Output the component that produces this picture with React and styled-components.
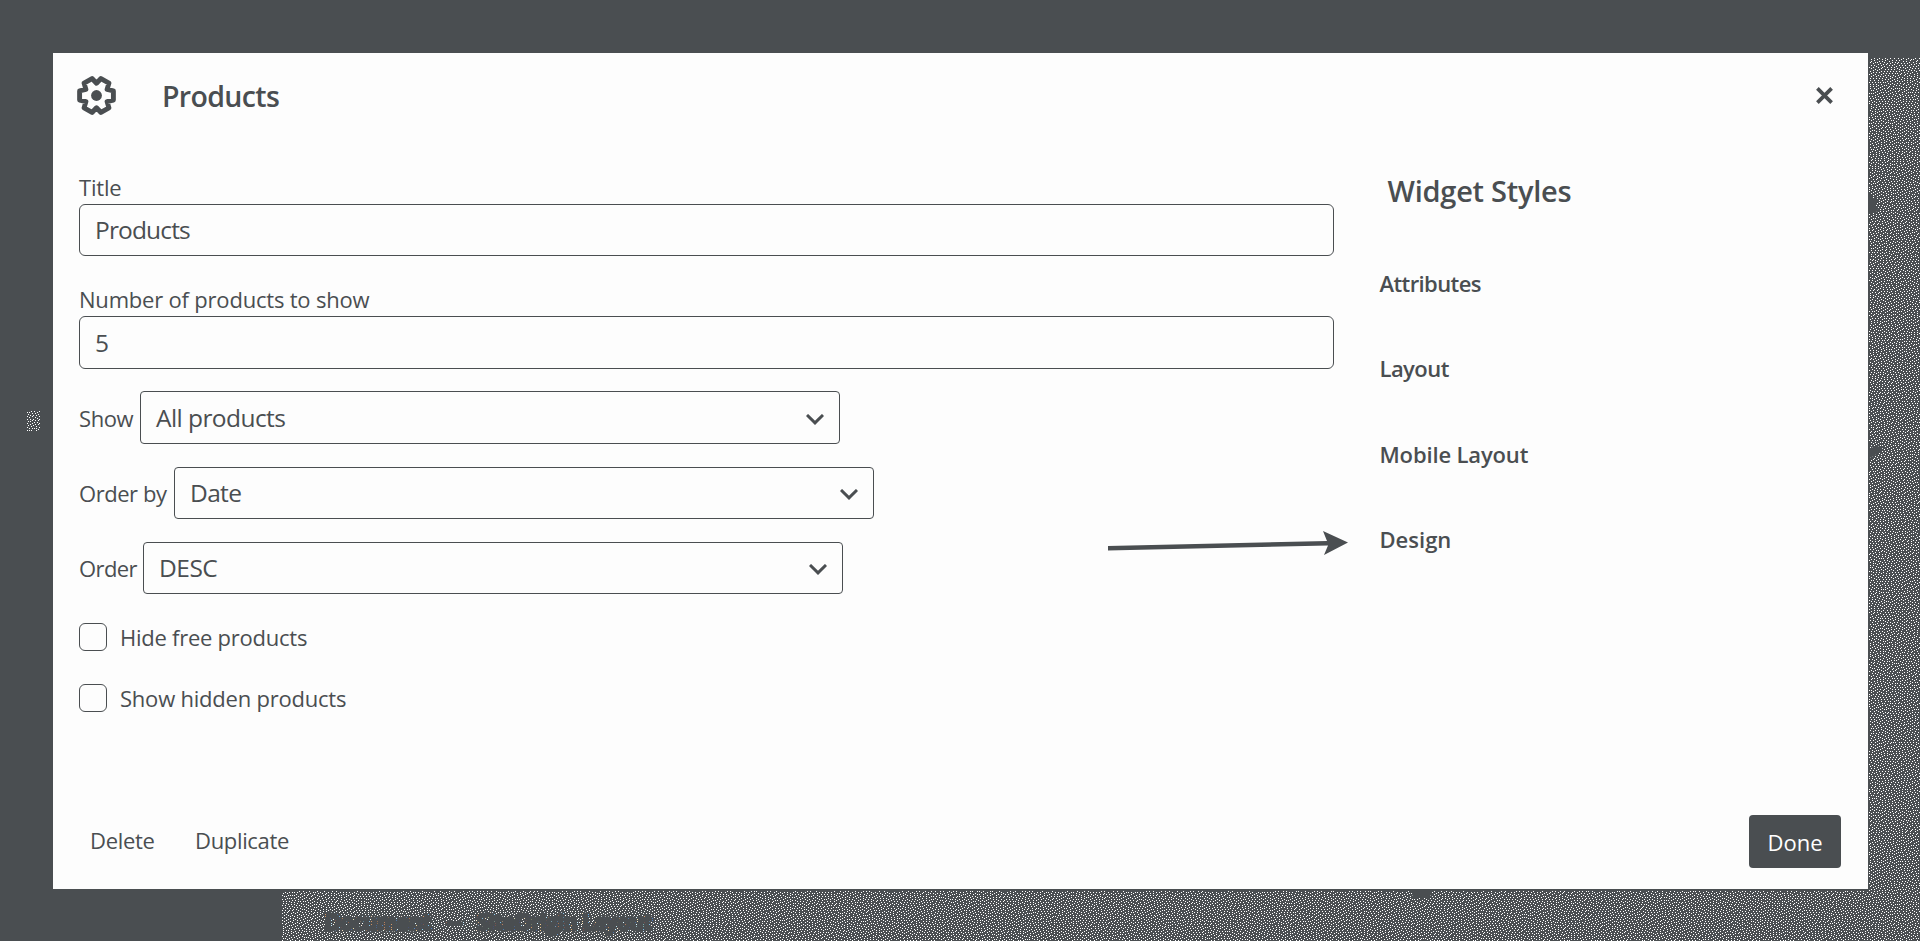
import React, { useMemo } from "react";
import styled, { createGlobalStyle } from "styled-components";

const ink = "#4a4e51";
const paper = "#fdfdfd";

const GlobalStyle = createGlobalStyle`
  * { box-sizing: border-box; }
  body {
    margin: 0;
    background: ${ink};
    color: ${ink};
    font-family: "Open Sans", "Noto Sans", sans-serif;
    font-size: 22px;
  }
`;

const Page = styled.div`
  position: relative;
  width: 1920px;
  height: 941px;
  padding: 53px 52px 52px 53px;
  overflow: hidden;
  background: ${ink};
`;

/* The dimmed editor page behind the dialog */
const Editor = styled.div`
  position: absolute;
  inset: 0;
  display: grid;
  grid-template-columns: 281px 1fr;
  padding-top: 58px;
`;

const EditorSidebar = styled.div`
  padding: 353px 0 0 26px;
`;

const EditorCanvas = styled.div`
  position: relative;
  display: flex;
  align-items: flex-end;
  overflow: hidden;
`;

const Grain = styled.svg`
  display: block;
  shape-rendering: crispEdges;
`;

const GrainFill = styled(Grain)`
  position: absolute;
  inset: 0;
`;

const Breadcrumb = styled.div`
  position: relative;
  display: flex;
  height: 37px;
  padding-left: 44px;
  font-size: 21px;
  font-weight: 600;
  line-height: 36px;
  white-space: nowrap;
  -webkit-text-stroke: 3px ${ink};
`;

const Crumb = styled.span`
  width: ${(p) => p.$width}px;
`;

const Dash = styled.span`
  width: 30px;
  font-size: 15px;
`;

const Shade = styled.svg`
  position: absolute;
  left: ${(p) => p.$left}px;
  top: ${(p) => p.$top}px;
  fill: ${ink};
`;

const Dialog = styled.section`
  position: relative;
  display: flex;
  flex-direction: column;
  width: 1815px;
  height: 836px;
  padding: 0 27px 0 26px;
  background: ${paper};
  box-shadow: 0 0 0 1px ${ink};
`;

const Header = styled.header`
  display: flex;
  align-items: center;
  height: 85px;
  margin-left: -2px;
  padding-right: 8px;
`;

const Heading = styled.h1`
  flex: 1;
  margin: 0 0 0 46px;
  font-size: 28.5px;
  font-weight: 600;
  letter-spacing: -0.65px;
  line-height: 40px;
`;

const Body = styled.div`
  display: flex;
  flex: 1;
`;

const Form = styled.form`
  display: flex;
  flex-direction: column;
  width: 1255px;
  padding-top: 37px;
`;

const Label = styled.label`
  flex: none;
  width: ${(p) => (p.$width ? `${p.$width}px` : "auto")};
  line-height: 24px;
  letter-spacing: ${(p) => p.$track || 0}px;
  white-space: nowrap;
`;

const Field = styled.div`
  display: flex;
  flex-direction: column;
  gap: 5px;
  margin-bottom: ${(p) => p.$after}px;
`;

const Box = styled.div`
  display: flex;
  align-items: center;
  width: 100%;
  height: ${(p) => p.$height || 52}px;
  padding: 0 15px 1px;
  border: 1px solid ${ink};
  border-radius: 6px;
  font-size: 24.5px;
  letter-spacing: ${(p) => p.$track || 0}px;
`;

const SelectBox = styled(Box)`
  justify-content: space-between;
  width: 700px;
  border-radius: 4px;
`;

const SelectRow = styled.div`
  display: flex;
  align-items: center;
  margin-bottom: ${(p) => p.$after}px;
`;

const Chevron = styled.svg`
  margin-top: 4px;
  fill: none;
  stroke: ${ink};
  stroke-width: 3;
`;

const CheckRow = styled.div`
  display: flex;
  align-items: center;
  gap: 13px;
  height: 28px;
  margin-bottom: 33px;
`;

const Check = styled.span`
  width: 28px;
  height: 28px;
  border: 1px solid ${ink};
  border-radius: 6px;
`;

const Styles = styled.aside`
  display: flex;
  flex-direction: column;
  padding: 33px 0 0 45.5px;
`;

const StylesHeading = styled.h2`
  margin: 0 0 60px 8px;
  font-size: 29px;
  font-weight: 600;
  line-height: 40px;
  letter-spacing: -0.25px;
`;

const StyleGroup = styled.div`
  height: 85.4px;
  line-height: 24px;
  font-weight: 600;
  letter-spacing: ${(p) => p.$track}px;
`;

const Footer = styled.footer`
  display: flex;
  align-items: center;
  height: 95px;
  padding-left: 11px;
`;

const TextButton = styled.span`
  width: ${(p) => p.$width}px;
  padding-bottom: 3px;
  letter-spacing: -0.33px;
`;

const DoneButton = styled.button`
  width: 92px;
  height: 53px;
  margin-left: auto;
  padding: 1px 0 0;
  border: 0;
  border-radius: 4px;
  background: ${ink};
  color: #fff;
  font: inherit;
`;

const Pointer = styled.svg`
  position: absolute;
  left: 1054px;
  top: 476px;
  fill: ${ink};
`;

/* One-pixel dots spread by error diffusion over a w × h area, kept where `keep` allows */
function grainPath(w, h, level, keep = () => true) {
  let row = new Float64Array(w + 2);
  let seed = 7;
  let d = "";
  for (let y = 0; y < h; y++) {
    const next = new Float64Array(w + 2);
    for (let x = 0; x < w; x++) {
      seed = (seed * 1103515245 + 12345) % 2147483648;
      const value = level + row[x + 1] + (y === 0 ? 0.12 : 0);
      const on = value >= 0.42 + (seed / 2147483648) * 0.16;
      if (on && keep(x, y)) d += `M${x} ${y}h1v1h-1z`;
      const err = value - (on ? 1 : 0);
      row[x + 2] += (err * 7) / 16;
      next[x] += (err * 3) / 16;
      next[x + 1] += (err * 5) / 16;
      next[x + 2] += err / 16;
    }
    row = next;
  }
  return d;
}

function gearPoints() {
  const points = [];
  for (let i = 0; i < 6; i++) {
    const a = (i * Math.PI) / 3;
    const at = (x, y) =>
      `${(x * Math.cos(a) - y * Math.sin(a)).toFixed(2)},${(x * Math.sin(a) + y * Math.cos(a)).toFixed(2)}`;
    points.push(at(16.9, -4.6), at(16.9, 4.6), at(10.6, 6.12));
  }
  return points.join(" ");
}

const Gear = () => (
  <svg width="39" height="39" viewBox="-19.5 -19.5 39 39">
    <polygon points={gearPoints()} fill="none" stroke={ink} strokeWidth="4.9" strokeLinejoin="round" />
    <circle r="5.4" fill={ink} />
  </svg>
);

const Close = () => (
  <svg width="17" height="17" viewBox="0 0 17 17">
    <path d="M1.4 1.4L15.6 15.6M15.6 1.4L1.4 15.6" stroke={ink} strokeWidth="3.7" />
  </svg>
);

function Select({ label, value, width, track, valueTrack, height, after }) {
  return (
    <SelectRow $after={after}>
      <Label $width={width} $track={track}>{label}</Label>
      <SelectBox $height={height} $track={valueTrack}>
        {value}
        <Chevron width="18" height="11" viewBox="0 0 18 11">
          <path d="M1 1L9 8.8L17 1" />
        </Chevron>
      </SelectBox>
    </SelectRow>
  );
}

export default function App() {
  const canvas = useMemo(() => grainPath(1639, 883, 0.16, (x, y) => x >= 1588 || y >= 833), []);
  const patch = useMemo(() => grainPath(15, 20, 0.18), []);

  return (
    <Page>
      <GlobalStyle />
      <Editor>
        <EditorSidebar>
          <Grain width="15" height="20" fill="#fff"><path d={patch} /></Grain>
        </EditorSidebar>
        <EditorCanvas>
          <GrainFill width="1639" height="883" fill="#fff">
            <path d={canvas} />
          </GrainFill>
          <Breadcrumb>
            <Crumb $width={122}>Document</Crumb>
            <Dash>—</Dash>
            <Crumb>SiteOrigin Layout</Crumb>
          </Breadcrumb>
        </EditorCanvas>
      </Editor>
      <Shade $left={1868} $top={195} width="12" height="18"><path d="M0 0H3V3L10 4L7 10L11 16L5 18H0z" /></Shade>
      <Shade $left={1868} $top={445} width="16" height="14"><path d="M0 4L8 1L15 2L13 6L6 11L0 14z" /></Shade>
      <Shade $left={1412} $top={889} width="19" height="9"><path d="M0 0H19V6L17 9H2L0 6z" /></Shade>

      <Dialog>
        <Header>
          <Gear />
          <Heading>Products</Heading>
          <Close />
        </Header>
        <Body>
          <Form>
            <Field $after={31}>
              <Label $track={-0.2}>Title</Label>
              <Box $track={-0.85}>Products</Box>
            </Field>
            <Field $after={22}>
              <Label $track={-0.2}>Number of products to show</Label>
              <Box $height={53}>5</Box>
            </Field>
            <Select label="Show" value="All products" width={61} track={-0.4} valueTrack={-0.56} height={53} after={23} />
            <Select label="Order by" value="Date" width={95} track={-0.45} valueTrack={-0.65} height={52} after={23} />
            <Select label="Order" value="DESC" width={64} track={-0.6} valueTrack={-0.5} height={52} after={29} />
            <CheckRow>
              <Check />
              <Label $track={-0.25}>Hide free products</Label>
            </CheckRow>
            <CheckRow>
              <Check />
              <Label $track={-0.22}>Show hidden products</Label>
            </CheckRow>
          </Form>
          <Styles>
            <StylesHeading>Widget Styles</StylesHeading>
            <StyleGroup $track={-0.6}>Attributes</StyleGroup>
            <StyleGroup $track={-0.55}>Layout</StyleGroup>
            <StyleGroup $track={-0.15}>Mobile Layout</StyleGroup>
            <StyleGroup $track={0}>Design</StyleGroup>
          </Styles>
        </Body>
        <Footer>
          <TextButton $width={105}>Delete</TextButton>
          <TextButton $width={110}>Duplicate</TextButton>
          <DoneButton>Done</DoneButton>
        </Footer>
        <Pointer width="242" height="28" viewBox="0 0 242 28">
          <path d="M1 17L220 12L216 2L241 13.5L217 26L221 16.5L1 21.5z" />
        </Pointer>
      </Dialog>
    </Page>
  );
}
